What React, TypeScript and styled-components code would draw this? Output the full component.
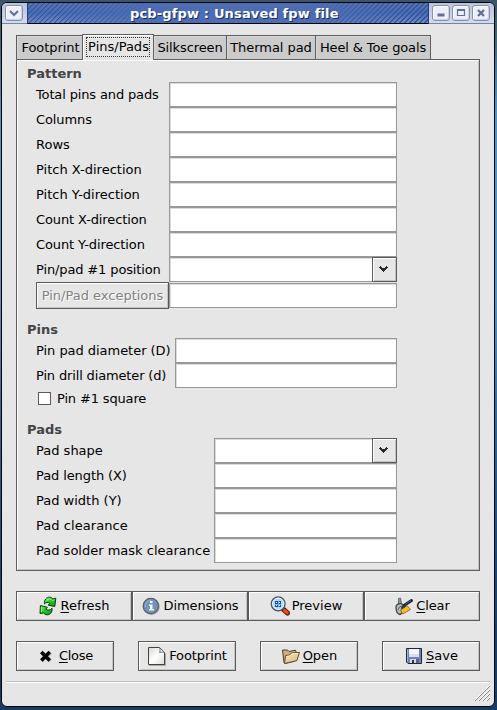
import React from 'react';
import styled, { createGlobalStyle } from 'styled-components';

const GlobalStyle = createGlobalStyle`
  *, *::before, *::after { box-sizing: border-box; }
  html, body { margin: 0; padding: 0; overflow: hidden; }
  body { font: 13px/16px "DejaVu Sans", "Bitstream Vera Sans", sans-serif; color: #000; }
`;

const Desktop = styled.div`
  width: 497px;
  height: 710px;
  padding: 2px 2px 3px 1px;
  background: linear-gradient(#3b5568 0, #3f6474 30px, #4a94cc 110px, #4d95cc 300px, #2a6ba5 420px, #174a80 560px, #163c66 710px);
`;

const Window = styled.div`
  display: flex;
  flex-direction: column;
  height: 705px;
  border: 1px solid #000;
  border-radius: 6px;
  background: #e6e6e6;
  overflow: hidden;
`;

const TitleBar = styled.header`
  display: flex;
  flex: none;
  height: 21px;
`;

const Controls = styled.div<{ $side: 'left' | 'right' }>`
  display: flex;
  flex: none;
  gap: 2px;
  width: ${(p) => (p.$side === 'left' ? 25 : 65)}px;
  padding: 2px 0 0 3px;
  background: linear-gradient(#b9c3dc, #d5dbe9);
  border-bottom: 1px solid #7083ad;
`;

const WindowButton = styled.button`
  display: grid;
  place-items: center;
  width: 18px;
  height: 16px;
  padding: 0;
  border: 1px solid #8590ad;
  border-radius: 3px;
  background: #eceffa;
  box-shadow: inset 1px 1px #fff, inset -1px -1px #c9d0e2;
`;

const Caption = styled.div`
  flex: 1;
  border-left: 1px solid #203a78;
  border-right: 1px solid #203a78;
  border-bottom: 1px solid #000;
  padding-left: 102px;
  background:
    linear-gradient(90deg, transparent 30px, #4c6cb3 135px, #4c6cb3 270px, transparent 380px),
    repeating-linear-gradient(135deg, #34549b 0, #34549b 1.1px, transparent 1.6px, transparent 3.54px),
    linear-gradient(#5474ba, #4b6bb2 50%, #6c8bca);
  color: #fff;
  font-weight: bold;
  line-height: 21px;
  letter-spacing: 0.15px;
  white-space: nowrap;
  text-shadow: 1px 1px #1a2f60;
`;

const Content = styled.main`
  flex: 1;
  display: flex;
  flex-direction: column;
  padding: 10px 14px 0;
`;

const TabStrip = styled.nav`
  display: flex;
  align-items: flex-end;
  height: 25px;
  position: relative;
`;

const Tab = styled.button<{ $width: number; $active?: boolean; $first?: boolean; $track?: number }>`
  flex: none;
  width: ${(p) => p.$width}px;
  height: ${(p) => (p.$active ? 26 : 24)}px;
  margin-bottom: ${(p) => (p.$active ? -1 : 0)}px;
  padding: ${(p) => (p.$active ? '2px 3px 5px' : p.$first ? '0 0 0 2px' : '0')};
  border: 1px solid #5e5e5e;
  border-left-width: ${(p) => (p.$first || p.$active ? 1 : 0)}px;
  border-right-width: ${(p) => (p.$first ? 0 : 1)}px;
  border-bottom: 0;
  background: ${(p) => (p.$active ? '#e6e6e6' : '#cbcbcb')};
  box-shadow: ${(p) => (p.$active ? 'inset 1px 1px #fff' : 'inset 1px 1px #d8d8d8')};
  font: inherit;
  letter-spacing: ${(p) => p.$track ?? 0}px;
  white-space: nowrap;
`;

const FocusRing = styled.span`
  display: block;
  height: 20px;
  width: 64px;
  padding-left: 1px;
  border: 1px dotted #333;
  line-height: 17px;
`;

const Page = styled.section`
  height: 512px;
  width: 464px;
  padding: 5px 0 0 10px;
  border: 1px solid #5e5e5e;
  box-shadow: inset 1px 1px #fff, inset -1px -1px #c4c4c4;
`;

const Group = styled.section<{ $gap: number }>`
  margin-bottom: ${(p) => p.$gap}px;
`;

const Heading = styled.h2`
  margin: 0;
  height: 17px;
  font: bold 13px/17px "DejaVu Sans", sans-serif;
  color: #444;
`;

const Row = styled.label<{ $height?: number }>`
  display: flex;
  align-items: center;
  width: 370px;
  height: ${(p) => p.$height ?? 25}px;
  padding-left: 9px;
`;

const Label = styled.span<{ $width: number; $track?: number }>`
  flex: none;
  width: ${(p) => p.$width}px;
  letter-spacing: ${(p) => p.$track ?? 0}px;
  white-space: nowrap;
`;

const ActionText = styled.span<{ $track: number }>`
  letter-spacing: ${(p) => p.$track}px;
  white-space: nowrap;
`;

const Entry = styled.input`
  flex: 1;
  min-width: 0;
  height: 25px;
  border: 1px solid #989898;
  border-radius: 0;
  background: #fff;
  box-shadow: inset 1px 1px #dcdcdc;
  outline: 0;
`;

const ComboEntry = styled(Entry)`border-right: 0;`;

const bevel = `
  border: 1px solid #5a5a5a;
  background: #e6e6e6;
  box-shadow: inset 1px 1px #fff, inset -1px -1px #c4c4c4;
`;

const ComboButton = styled.button`
  ${bevel}
  display: grid;
  place-items: center;
  width: 25px;
  height: 25px;
  padding: 0 2px 2px 0;
`;

const ExceptionsButton = styled.button`
  ${bevel}
  flex: none;
  width: 133px;
  height: 27px;
  padding: 0;
  font: inherit;
  color: #828282;
  text-shadow: 1px 1px #fff;
`;

const Check = styled.span`
  width: 13px;
  height: 13px;
  margin: 0 6px 0 2px;
  border: 1px solid #5a5a5a;
  background: #fff;
`;

const ToolRow = styled.div<{ $gap: number; $top: number }>`
  display: flex;
  gap: ${(p) => p.$gap}px;
  margin-top: ${(p) => p.$top}px;
  width: 464px;
`;

const ToolButton = styled.button`
  ${bevel}
  flex: 1;
  display: flex;
  align-items: center;
  justify-content: center;
  gap: 2px;
  height: 30px;
  padding: 0 0 1px;
  font: inherit;
  white-space: nowrap;
`;

const Mnemonic = styled.span`
  text-decoration: underline;
  text-decoration-thickness: 1px;
  text-underline-offset: 2px;
  text-decoration-skip-ink: none;
`;

const StatusBar = styled.footer`
  display: flex;
  justify-content: flex-end;
  height: 25px;
  margin: 0 4px;
  border-top: 1px solid #bebebe;
  box-shadow: inset 0 1px #fff;
  padding: 2px 0 0;
`;

const Icon = styled.svg`
  flex: none;
  display: block;
`;

const Chevron = () => (
  <Icon width="9" height="6" viewBox="0 0 9 6" shapeRendering="crispEdges" fill="#2b2b2b">
    <path d="M1 0h1v1h1v1h3v-1h1v-1h1v1h1v1h-1v1h-1v1h-1v1h-1v1h-1v-1h-1v-1h-1v-1h-1v-1h-1v-1h1z" />
  </Icon>
);

const RefreshIcon = () => (
  <Icon width="20" height="20" viewBox="0 0 20 20">
    <defs>
      <linearGradient id="leaf" x2="1" y2="1"><stop stopColor="#7df06f" /><stop offset=".5" stopColor="#25c52a" /><stop offset="1" stopColor="#079a14" /></linearGradient>
    </defs>
    <g fill="url(#leaf)" stroke="#064006" strokeLinejoin="round">
      <path d="M6.500 8C5.800 4 8.500 1 11.700 1.200c1.500.1 2.500.8 3.100 1.800l3-.8-1 8.300-6.600-1.300 1.600-1.900C10 6 8 6 6.500 8z" />
      <path d="M14 12.200c.6 4-2 6.800-5 6.600-1.500-.1-2.700-.8-3.400-1.800L2 17.500l.4-8 7 1.800-1.700 1.900c1.800 1.300 4.400 1.300 6.300-1z" />
    </g>
    <path d="M8 5c2-2.700 4.300-2.500 6.500-.4l2-.8M3.500 15.800v-4.500" fill="none" stroke="#a5f79a" strokeWidth=".8" />
  </Icon>
);

const InfoIcon = () => (
  <Icon width="20" height="20" viewBox="0 0 20 20">
    <circle cx="10.300" cy="10.600" r="8.500" fill="#a1a1a1" />
    <circle cx="9.800" cy="10" r="7.600" fill="#7492bd" stroke="#59616b" strokeWidth="1.300" />
    <path d="M4.500 11a5.500 5.500 0 0 1 5.500-6.500" fill="none" stroke="#9ab3d5" />
    <path d="M9 5h2.500v2H9zM8 8.500h3.500V13H13v1.500H8V13h1v-3H8z" fill="#fff" />
  </Icon>
);

const PreviewIcon = () => (
  <Icon width="20" height="20" viewBox="0 0 20 20">
    <path d="m13.500 13.500 4 3.500" stroke="#68200e" strokeWidth="5" strokeLinecap="round" />
    <path d="m14.500 14.500 2.700 2.200" stroke="#ef4a20" strokeWidth="3" strokeLinecap="round" />
    <circle cx="8.200" cy="7.800" r="6.900" fill="#acdafa" stroke="#50565f" strokeWidth="1.400" />
    <circle cx="8.200" cy="7.800" r="5.600" fill="none" stroke="#e5f5ff" />
    <path d="M5 5h6v6H5z" fill="#72b1ef" />
    <path d="M5 5h3v3H5zm4 0h2v3H9zM5 9h3v2H5zm4 0h2v2H9z" fill="#194f9b" />
    <path d="M6 6h1v1H6zm3 0h1v1H9zM6 9h1v1H6zm3 0h1v1H9z" fill="#eff" />
  </Icon>
);

const ClearIcon = () => (
  <Icon width="20" height="20" viewBox="0 0 20 20">
    <path d="M4.500 2.500 6.500 2l1 5.500-3 1z" fill="#8f989c" stroke="#52595c" strokeWidth=".8" />
    <path d="M2 11c0-2.500 3-4 6-3l3 2-2 6-3 2.500c-3-.5-4-3-4-7.500z" fill="#b6bdbd" stroke="#3f4548" strokeWidth="1.300" />
    <path d="M4 14c1-3 2-4 5-4" fill="none" stroke="#59605f" />
    <path d="m10 9.500 7.500-5" stroke="#15243a" strokeWidth="3" strokeLinecap="round" />
    <path d="m11 8.500 6-4" stroke="#3b6294" />
    <path d="m6.500 14 6.500-4.500 3.500 4-8 4.500z" fill="#f8bc20" stroke="#795a17" strokeWidth=".8" />
    <path d="m7 11.500 3-3 2.500 1.500-5 3.500z" fill="#26384d" />
  </Icon>
);

const CloseIcon = () => (
  <Icon width="20" height="20" viewBox="0 0 20 20">
    <path d="m4.500 6.500 9 8.500m0-8.500-9 8.500" stroke="#b5b5b5" strokeWidth="4" />
    <path d="m4.300 6 8.400 8.500m0-8.500-8.400 8.500" stroke="#050505" strokeWidth="3.500" />
  </Icon>
);

const DocumentIcon = () => (
  <Icon width="20" height="20" viewBox="0 0 20 20">
    <defs><linearGradient id="paper" x2="1" y2="1"><stop stopColor="#d7d7d2" /><stop offset=".5" stopColor="#fff" /><stop offset="1" stopColor="#ddddd6" /></linearGradient></defs>
    <path d="M2 2h12l5 6v12H2z" fill="#aaa" />
    <path d="M1.500 1.500h11l5 5v12h-16z" fill="url(#paper)" stroke="#42423f" />
    <path d="M12.500 1.500c.8 2 .8 3.500 0 5 2-.6 3.500-.6 5 0z" fill="#fff" stroke="#686864" />
  </Icon>
);

const FolderIcon = () => (
  <Icon width="20" height="20" viewBox="0 0 20 20">
    <defs><linearGradient id="folder" x2="1" y2="1"><stop stopColor="#fbe3b9" /><stop offset="1" stopColor="#dcb679" /></linearGradient></defs>
    <path d="M1.500 4h5L8 5.500l6.500-1.300 1 3-2 8L4 17.500l-1-1z" fill="#cfae80" stroke="#4a3c28" strokeLinejoin="round" />
    <path d="M3.500 17.500 4.600 9.500l4-.5 1.700-2 8.200-.6-2.700 8.300z" fill="url(#folder)" stroke="#5d4a31" strokeLinejoin="round" />
    <path d="m5.600 10.400 3.500-.5 1.700-2 6-.4" fill="none" stroke="#fff0ce" />
  </Icon>
);

const SaveIcon = () => (
  <Icon width="20" height="20" viewBox="0 0 20 20">
    <path d="M2.500 2.500h15v15H4l-1.500-1.500z" fill="#7480b7" stroke="#20243d" strokeLinejoin="round" />
    <path d="M3.500 3.500v12" stroke="#a9b0d6" />
    <path d="M5 3h10v8H5z" fill="#f4f4fa" />
    <path d="M5 8h10v3H5z" fill="#dcdde9" />
    <path d="M6 13h9v4H6z" fill="#d8d8d8" />
    <path d="M12 13h3v4h-3z" fill="#5d6487" />
    <path d="M8 14h2v3H8z" fill="#30344d" />
  </Icon>
);

const GripIcon = () => (
  <Icon width="17" height="17" viewBox="0 0 17 17">
    {[0, 4, 8, 12].map((n) => (
      <g key={n} fill="none">
        <path d={`M${n + 1} 17 17 ${n + 1}`} stroke="#fff" />
        <path d={`M${n + 1.5} 17.500 17.500 ${n + 1.5}`} stroke="#8c8c8c" />
      </g>
    ))}
  </Icon>
);

const Glyph = ({ d, width = 2 }: { d: string; width?: number }) => (
  <Icon width="10" height="10" viewBox="0 0 10 10" fill="none" stroke="#5f6f98" strokeWidth={width}>
    <path d={d} />
  </Icon>
);

type FieldSpec = { label: string; track?: number; combo?: boolean };

const patternFields: FieldSpec[] = [
  { label: 'Total pins and pads', track: -0.14 },
  { label: 'Columns', track: -0.1 },
  { label: 'Rows' },
  { label: 'Pitch X-direction' },
  { label: 'Pitch Y-direction' },
  { label: 'Count X-direction', track: -0.12 },
  { label: 'Count Y-direction', track: -0.12 },
  { label: 'Pin/pad #1 position', track: -0.13, combo: true },
];

const pinFields: FieldSpec[] = [
  { label: 'Pin pad diameter (D)', track: -0.04 },
  { label: 'Pin drill diameter (d)', track: -0.15 },
];

const padFields: FieldSpec[] = [
  { label: 'Pad shape', combo: true },
  { label: 'Pad length (X)', track: -0.1 },
  { label: 'Pad width (Y)' },
  { label: 'Pad clearance', track: 0.06 },
  { label: 'Pad solder mask clearance' },
];

const Field = ({ label, width, combo, track }: FieldSpec & { width: number }) => (
  <Row>
    <Label $width={width} $track={track}>{label}</Label>
    {combo ? <><ComboEntry /><ComboButton type="button"><Chevron /></ComboButton></> : <Entry />}
  </Row>
);

const Action = ({ icon, text, mnemonic, track = 0 }: { icon: React.ReactNode; text: string; mnemonic?: boolean; track?: number }) => (
  <ToolButton type="button">
    {icon}
    <ActionText $track={track}>{mnemonic ? <><Mnemonic>{text[0]}</Mnemonic>{text.slice(1)}</> : text}</ActionText>
  </ToolButton>
);

export default function App() {
  return (
    <>
      <GlobalStyle />
      <Desktop>
        <Window>
          <TitleBar>
            <Controls $side="left">
              <WindowButton aria-label="Window menu"><Glyph d="M1 3l4 4 4-4" /></WindowButton>
            </Controls>
            <Caption>pcb-gfpw : Unsaved fpw file</Caption>
            <Controls $side="right">
              <WindowButton aria-label="Minimize"><Glyph d="M1.500 7h7" width={3} /></WindowButton>
              <WindowButton aria-label="Maximize"><Glyph d="M1.500 1.500h7v6h-7zM1 2.500h8" width={1.200} /></WindowButton>
              <WindowButton aria-label="Close"><Glyph d="M2 2l6 6M8 2 2 8" width={2.300} /></WindowButton>
            </Controls>
          </TitleBar>
          <Content>
            <TabStrip>
              <Tab $width={66} $first $track={-0.05}>Footprint</Tab>
              <Tab $width={72} $active><FocusRing>Pins/Pads</FocusRing></Tab>
              <Tab $width={73} $track={-0.1}>Silkscreen</Tab>
              <Tab $width={89} $track={-0.05}>Thermal pad</Tab>
              <Tab $width={115} $track={-0.12}>Heel &amp; Toe goals</Tab>
            </TabStrip>
            <Page>
              <Group $gap={12}>
                <Heading>Pattern</Heading>
                {patternFields.map((f) => <Field key={f.label} {...f} width={133} />)}
                <Row as="div" $height={27}>
                  <ExceptionsButton type="button" disabled>Pin/Pad exceptions</ExceptionsButton>
                  <Entry />
                </Row>
              </Group>
              <Group $gap={12}>
                <Heading>Pins</Heading>
                {pinFields.map((f) => <Field key={f.label} {...f} width={139} />)}
                <Row $height={21}><Check /><Label $width={90} $track={-0.15}>Pin #1 square</Label></Row>
              </Group>
              <Group $gap={0}>
                <Heading>Pads</Heading>
                {padFields.map((f) => <Field key={f.label} {...f} width={178} />)}
              </Group>
            </Page>
            <ToolRow $gap={0} $top={20}>
              <Action icon={<RefreshIcon />} text="Refresh" mnemonic />
              <Action icon={<InfoIcon />} text="Dimensions" track={-0.08} />
              <Action icon={<PreviewIcon />} text="Preview" />
              <Action icon={<ClearIcon />} text="Clear" mnemonic track={-0.15} />
            </ToolRow>
            <ToolRow $gap={24} $top={20}>
              <Action icon={<CloseIcon />} text="Close" mnemonic track={-0.25} />
              <Action icon={<DocumentIcon />} text="Footprint" track={-0.1} />
              <Action icon={<FolderIcon />} text="Open" mnemonic />
              <Action icon={<SaveIcon />} text="Save" mnemonic />
            </ToolRow>
          </Content>
          <StatusBar><GripIcon /></StatusBar>
        </Window>
      </Desktop>
    </>
  );
}
